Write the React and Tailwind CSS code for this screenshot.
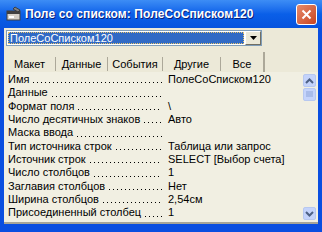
import React from 'react';

const rows = [
  { name: 'Имя', value: 'ПолеСоСписком120' },
  { name: 'Данные', value: '' },
  { name: 'Формат поля', value: '\\' },
  { name: 'Число десятичных знаков', value: 'Авто' },
  { name: 'Маска ввода', value: '' },
  { name: 'Тип источника строк', value: 'Таблица или запрос' },
  { name: 'Источник строк', value: 'SELECT [Выбор счета]' },
  { name: 'Число столбцов', value: '1' },
  { name: 'Заглавия столбцов', value: 'Нет' },
  { name: 'Ширина столбцов', value: '2,54см' },
  { name: 'Присоединенный столбец', value: '1' },
];

const tabs = [
  { label: 'Макет', w: 'w-[52px]' },
  { label: 'Данные', w: 'w-[52px]' },
  { label: 'События', w: 'w-[55px]' },
  { label: 'Другие', w: 'w-[58px]' },
];

function FormIcon() {
  return (
    <svg width="16" height="16" viewBox="0 0 16 16">
      <rect x="1" y="5" width="13" height="9" fill="#d4d0c8" stroke="#404040" />
      <rect x="1" y="5" width="13" height="3" fill="#404040" />
      <path d="M9 1 L14 4 L12 6 L7 3 Z" fill="#808080" stroke="#303030" strokeWidth="0.8" />
      <rect x="3" y="10" width="5" height="2" fill="#ffffff" />
    </svg>
  );
}

function ScrollBtn({ dir }) {
  return (
    <div className="w-[13px] h-[13px] rounded-[2px] border border-[#b7c8f0] bg-[#c4d3fb] flex items-center justify-center">
      {dir === 'thumb' ? (
        <svg width="7" height="7" viewBox="0 0 7 7">
          <path d="M0 1H7M0 3H7M0 5H7" stroke="#8ea5d9" strokeWidth="1" />
        </svg>
      ) : (
        <svg width="9" height="6" viewBox="0 0 9 6">
          <path d={dir === 'up' ? 'M1 5 L4.5 1.5 L8 5' : 'M1 1 L4.5 4.5 L8 1'} fill="none" stroke="#4d6185" strokeWidth="2" />
        </svg>
      )}
    </div>
  );
}

export default function App() {
  return (
    <div
      className="w-[322px] h-[232px] bg-[#0a4ee0] flex flex-col overflow-hidden"
      style={{ fontFamily: '"Liberation Sans", Arial, sans-serif' }}
    >
      {/* Title bar */}
      <div className="h-[28px] shrink-0 bg-gradient-to-b from-[#3d8df5] via-[#0a5fe8] to-[#0653de] flex items-center pl-[6px] pr-[5px]">
        <FormIcon />
        <span className="ml-[3px] text-white text-[12px] font-bold tracking-[0.1px] whitespace-nowrap" style={{ textShadow: '1px 1px #0a1f7a' }}>
          Поле со списком: ПолеСоСписком120
        </span>
        <div className="ml-auto w-[21px] h-[21px] rounded-[3px] border border-white bg-gradient-to-br from-[#e68b6c] to-[#c8431c] flex items-center justify-center">
          <svg width="11" height="11" viewBox="0 0 11 11">
            <path d="M1.5 1.5 L9.5 9.5 M9.5 1.5 L1.5 9.5" stroke="#ffffff" strokeWidth="2" />
          </svg>
        </div>
      </div>

      {/* Client */}
      <div className="flex-1 mx-[4px] mb-[8px] bg-[#ece9d8] flex flex-col border-b-2 border-[#a6a498]">
        {/* Combo */}
        <div className="mt-[2px] ml-[2px] w-[256px] h-[16px] bg-white border border-[#7f9db9] flex">
          <div className="flex-1 m-[1px] bg-[#316ac5] border border-dotted border-[#e9c46a] flex items-center pl-[1px]">
            <span className="text-white text-[11px] leading-none">ПолеСоСписком120</span>
          </div>
          <div className="w-[16px] bg-[#ece9d8] border-l border-t border-white border-r border-b border-r-[#716f64] border-b-[#716f64] flex items-center justify-center">
            <svg width="7" height="4" viewBox="0 0 7 4">
              <path d="M0 0H7L3.5 4Z" fill="#000000" />
            </svg>
          </div>
        </div>

        {/* Tabs */}
        <div className="mt-[6px] h-[20px] flex items-stretch text-[11px] text-black">
          {tabs.map((t) => (
            <div key={t.label} className={`${t.w} flex items-end justify-center pb-[1px]`}>
              <span className="flex-1 text-center leading-[13px]">{t.label}</span>
              <div className="w-px h-[14px] bg-[#aca899]" />
            </div>
          ))}
          <div className="w-[44px] flex items-start justify-center pt-[4px] border-r-2 border-[#aca899]">
            <span>Все</span>
          </div>
        </div>

        {/* Property list */}
        <div className="flex-1 flex bg-[#f1efe2] overflow-hidden">
          <div className="flex-1 pt-[1px] text-[11px] text-black">
            {rows.map((r) => (
              <div key={r.name} className="h-[13.33px] leading-[13.33px] flex whitespace-nowrap">
                <div className="w-[158px] pl-[4px] flex">
                  <span className="shrink-0">{r.name}</span>
                  <div className="ml-[4px] flex-1 self-end mb-[3px] h-px bg-[linear-gradient(to_right,#000_1px,transparent_1px)] bg-[length:4px_1px] bg-repeat-x" />
                </div>
                <div className="ml-[6px]">{r.value}</div>
              </div>
            ))}
          </div>
          <div className="w-[15px] pt-[2px] pb-[2px] flex flex-col items-start">
            <ScrollBtn dir="up" />
            <div className="mt-[1px]">
              <ScrollBtn dir="thumb" />
            </div>
            <div className="mt-auto">
              <ScrollBtn dir="down" />
            </div>
          </div>
        </div>
      </div>
    </div>
  );
}
